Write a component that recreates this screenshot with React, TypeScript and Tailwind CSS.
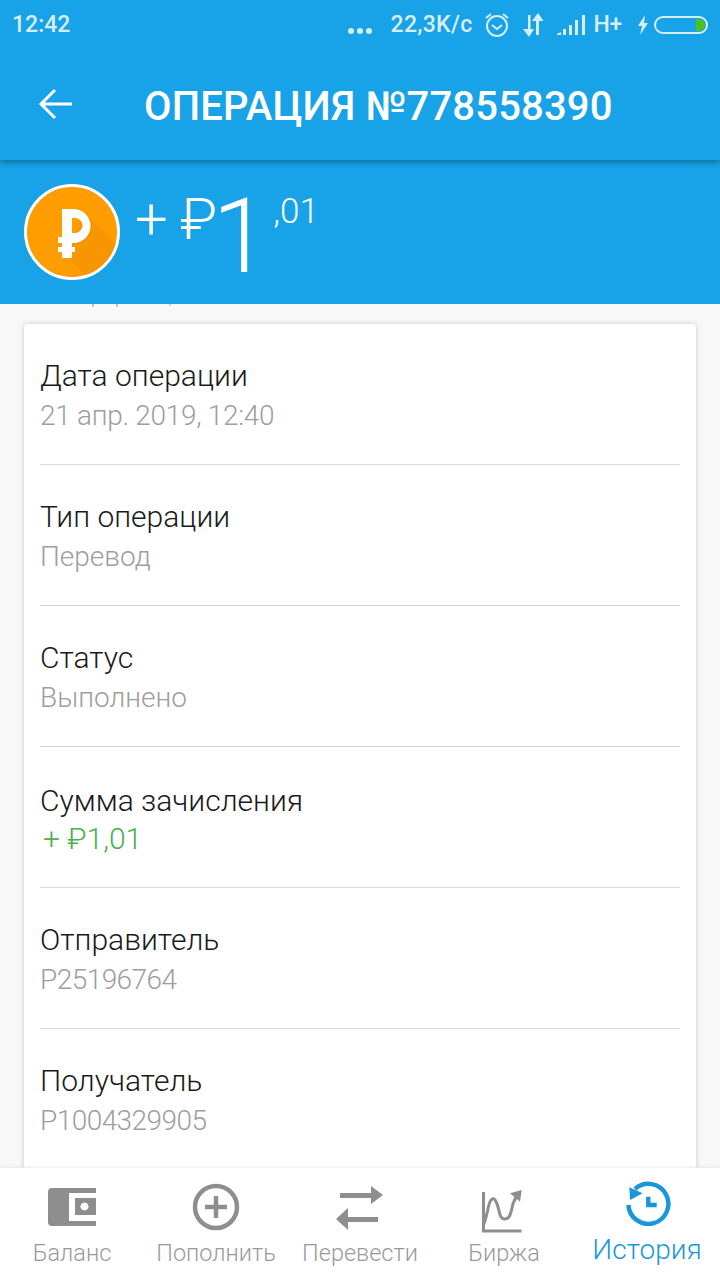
const rows = [
  { title: "Дата операции", value: "21 апр. 2019, 12:40", tracking: "tracking-[-0.3px]" },
  { title: "Тип операции", value: "Перевод" },
  { title: "Статус", value: "Выполнено" },
  { title: "Сумма зачисления", value: "+ ₽1,01", green: true },
  { title: "Отправитель", value: "P25196764", tracking: "tracking-[-0.55px]" },
  { title: "Получатель", value: "P1004329905", tracking: "tracking-[-0.55px]" },
];

function StatusBar() {
  return (
    <div className="h-[50px] flex items-center pl-3 pr-3 text-[#d6eefb] font-medium text-[23px]">
      <span>12:42</span>
      <div className="ml-auto flex items-center">
        <div className="flex gap-[3px] mt-[12px] mr-[19px]">
          <i className="w-[6px] h-[6px] rounded-full bg-[#d6eefb]" />
          <i className="w-[6px] h-[6px] rounded-full bg-[#d6eefb]" />
          <i className="w-[6px] h-[6px] rounded-full bg-[#d6eefb]" />
        </div>
        <span className="mr-[10px] tracking-[0.3px]">22,3K/c</span>
        <svg width="28" height="28" viewBox="0 0 28 28" fill="none" stroke="#d6eefb" strokeWidth="2" className="mr-[10px]">
          <circle cx="14" cy="15" r="10" />
          <path d="M9 14l5 4 5-4M3 7l5-4M25 7l-5-4" />
        </svg>
        <svg width="24" height="26" viewBox="0 0 24 26" fill="#d6eefb" className="mr-[11px]">
          <path d="M7 3h2.500v14H13L8 25 2 17h5zM15 23V9h-4l6-8 5.500 8H18v14z" />
        </svg>
        <svg width="32" height="24" viewBox="0 0 32 24" fill="#d6eefb" className="mr-[6px]">
          <path d="M1 21l4-2v3H1zM7 16h3v6H7zM13 12h3v10h-3zM19 7h3v15h-3zM26 2h3v20h-3z" />
        </svg>
        <span className="mr-[14px] tracking-[-0.3px]">H+</span>
        <svg width="14" height="22" viewBox="0 0 14 22" fill="#d6eefb" className="mr-[4px]">
          <path d="M9 1L2 12h4l-2 9 8-12H8z" />
        </svg>
        <div className="w-[54px] h-[18px] rounded-full border-2 border-[#d6eefb] flex justify-end items-stretch overflow-hidden">
          <div className="w-[9px] bg-[#4fc21c] rounded-r-full mr-[1px] my-[1px]" />
        </div>
      </div>
    </div>
  );
}

function Header() {
  return (
    <div className="h-[110px] flex items-center">
      <svg width="34" height="32" viewBox="0 0 34 32" fill="none" stroke="white" strokeWidth="3" className="ml-[38px] mt-[-2px] shrink-0">
        <path d="M34 16H3M17 2L3 16l14 14" />
      </svg>
      <h1 className="ml-[72px] text-white font-medium text-[40px] tracking-[0.16px] whitespace-nowrap mt-[4px]">ОПЕРАЦИЯ №778558390</h1>
    </div>
  );
}

function Coin() {
  return (
    <div className="w-[96px] h-[96px] rounded-full bg-[#ff9c00] border-[3px] border-white flex items-center justify-center shrink-0 overflow-hidden">
      <svg width="96" height="96" viewBox="0 0 96 96" className="shrink-0">
        <path d="M62 30L94 62V75L72 96H65L40 70z" fill="#f79600" />
        <path
          fillRule="evenodd"
          fill="white"
          d="M38 25H49.500a17 17 0 0 1 0 34H48v4h3v5h-3v6H38v-6h-4v-5h4v-4h-4v-6h4zM48 34h3a7.500 7.500 0 0 1 0 15h-3z"
        />
      </svg>
    </div>
  );
}

function NavItem({ label, active, children }: { label: string; active?: boolean; children: React.ReactNode }) {
  return (
    <div className="flex flex-col items-center whitespace-nowrap">
      <div className="h-[54px] flex items-center justify-center">{children}</div>
      <span className={active ? "text-[#1a97dc] text-[28px] font-light leading-[36px] mt-[-2px] ml-[-2px]" : "text-[#9a9a9a] text-[23.500px] font-light leading-[36px] mt-[1px]"}>
        {label}
      </span>
    </div>
  );
}

export default function App() {
  return (
    <div className="w-[720px] h-[1280px] flex flex-col overflow-hidden bg-[#f8f8f8] font-['Roboto',sans-serif]">
      <div className="bg-[#18a2e8] h-[160px] shrink-0 relative z-10 shadow-[0_2px_6px_rgba(0,0,0,0.35)]">
        <StatusBar />
        <Header />
      </div>
      <div className="bg-[#18a2e8] h-[144px] shrink-0 flex pl-[24px] pt-[24px] text-white font-light">
        <Coin />
        <div className="ml-[15px] flex items-start">
          <span className="text-[58px] leading-[70px] tracking-[-1px]">+ ₽</span>
          <span className="text-[103px] leading-[110px] mt-[-2px] ml-[-4px]">1</span>
          <span className="text-[35px] leading-[40px] mt-[8px] ml-[4px]">,01</span>
        </div>
      </div>
      <div className="flex-1 min-h-0 overflow-hidden px-[24px]">
        {/* scrolled label poking out under the amount bar */}
        <div className="h-[20px] flex items-start">
          <i className="w-[2px] h-[3px] bg-[#a9c4d4] ml-[68px]" />
          <i className="w-[2px] h-[3px] bg-[#a9c4d4] ml-[22px]" />
          <i className="w-[2px] h-[2px] bg-[#c4d4de] ml-[51px]" />
        </div>
        <div className="bg-white rounded-[4px] shadow-[0_0_5px_rgba(0,0,0,0.2)] px-[16px]">
          {rows.map((r, i) => (
            <div key={r.title} className={`pt-[32px] ${i === 0 ? "h-[140px]" : "h-[141px] border-t border-[#d8d8d8]"}`}>
              <div className={`text-[30px] leading-[40px] font-light text-[#1a1a1a] ${r.green ? "mt-[2px]" : ""}`}>{r.title}</div>
              <div
                className={`leading-[40px] font-light ${
                  r.green ? "text-[30px] text-[#4caf50] ml-[3px] mt-[-2px]" : "text-[28px] text-[#9e9e9e]"
                } ${r.tracking ?? ""}`}
              >
                {r.value}
              </div>
            </div>
          ))}
        </div>
      </div>
      <div className="h-[112px] shrink-0 bg-white relative z-10 grid grid-cols-5 items-start pt-[12px] shadow-[0_-1px_3px_rgba(0,0,0,0.08)]">
        <NavItem label="Баланс">
          <svg width="48" height="38" viewBox="0 0 48 38" fill="#8e8e8e">
            <path d="M4 0h44v5H21v28h27v5H4a4 4 0 0 1-4-4V4a4 4 0 0 1 4-4z" />
            <path fillRule="evenodd" d="M27 10h21v17H27zM36.500 14.500a4 4 0 1 0 .01 0z" />
          </svg>
        </NavItem>
        <NavItem label="Пополнить">
          <svg width="48" height="48" viewBox="0 0 48 48" fill="none" stroke="#8e8e8e" strokeWidth="4.500">
            <circle cx="24" cy="24" r="21" />
            <path d="M24 13v22M13 24h22" />
          </svg>
        </NavItem>
        <NavItem label="Перевести">
          <svg width="48" height="44" viewBox="0 0 48 44" fill="#8e8e8e" className="mt-[2px]">
            <path d="M4 7H35V0L47 9 35 18v-6H4zM42 31H12v-9L0 33l12 11v-8h30z" />
          </svg>
        </NavItem>
        <NavItem label="Биржа">
          <svg width="44" height="44" viewBox="0 0 44 44" fill="none" stroke="#8e8e8e" strokeWidth="3" className="mt-[8px] ml-[-4px]">
            <path d="M3.500 3v39h38" />
            <path d="M3.300 36C7 30 8 14 11 11c3-3 5 0 7 7s2 12 6.500 12 6-3 8.500-15.500L37 6" />
            <path d="M41.700 1L30 4.300l10 8.400z" fill="#8e8e8e" stroke="none" />
          </svg>
        </NavItem>
        <NavItem label="История" active>
          <svg width="46" height="46" viewBox="0 0 46 46" fill="none" stroke="#1a97dc" strokeWidth="4.500" className="mb-[8px]">
            <path d="M10 9A20 20 0 1 1 3.400 25" />
            <path d="M4.300 7.300L17.700 13.300 5 20z" fill="#1a97dc" stroke="none" />
            <path d="M23.300 16.700V25H31.700" />
          </svg>
        </NavItem>
      </div>
    </div>
  );
}
